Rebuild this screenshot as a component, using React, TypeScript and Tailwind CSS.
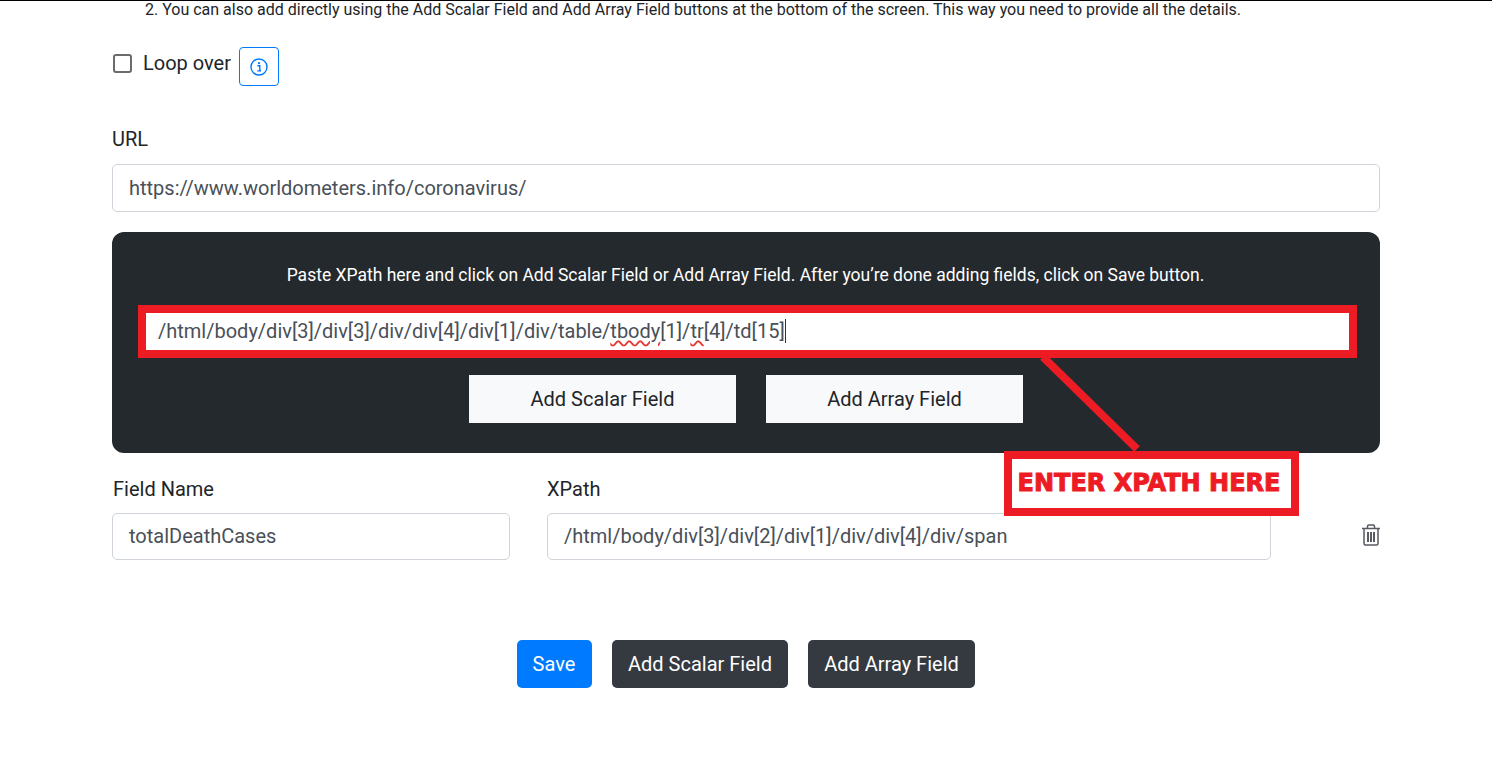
import React from "react";

const F = { fontFamily: "Roboto, sans-serif" };

function Trash() {
  return (
    <svg width="20" height="22" viewBox="0 0 20 22" fill="none" stroke="#555b60" strokeWidth="1.5">
      <path d="M1 4.5h18" />
      <path d="M6.5 4V2.2C6.5 1.5 7 1 7.700 1h4.600c.7 0 1.200.5 1.200 1.200V4" />
      <path d="M3 5v14.500C3 20.400 3.600 21 4.500 21h11c.9 0 1.500-.6 1.500-1.500V5" />
      <path d="M7 8v10M10 8v10M13 8v10" strokeWidth="2" />
    </svg>
  );
}

function Info() {
  return (
    <svg width="18" height="18" viewBox="0 0 18 18" fill="none">
      <circle cx="9" cy="9" r="8" stroke="#007bff" strokeWidth="1.4" />
      <circle cx="9" cy="5.200" r="1.100" fill="#007bff" />
      <path d="M7.300 7.700H9.800V12.600H11M7.200 12.900H11" stroke="#007bff" strokeWidth="1.400" />
    </svg>
  );
}

function Field({ className, value }: { className: string; value: string }) {
  return (
    <div className={`flex items-center px-4 bg-white border border-[#ced4da] rounded-[5px] text-[20px] text-[#495057] ${className}`}>
      {value}
    </div>
  );
}

export default function App() {
  return (
    <div style={F} className="relative w-[1492px] h-[766px] overflow-hidden bg-white border-t border-black text-[#212529]">
      <p className="pl-[145px] h-[18px] leading-[18px] text-[16px] text-[#212529]">
        2. You can also add directly using the Add Scalar Field and Add Array Field buttons at the bottom of the screen. This way you need to provide all the details.
      </p>

      <div className="px-[112px]">
        <div className="flex items-start mt-[28px] h-[39px]">
          <span className="mt-[7px] ml-[1px] w-[19px] h-[19px] border-2 border-[#6b6b6b] rounded-[3px] bg-white" />
          <span className="ml-[11px] mt-[2px] text-[20px] leading-[28px]">Loop over</span>
          <span className="ml-[8px] w-[40px] h-[39px] flex items-center justify-center border border-[#007bff] rounded-[4px]">
            <Info />
          </span>
        </div>

        <div className="mt-[40px] text-[20px] leading-[27px]">URL</div>
        <Field className="mt-[11px] h-[48px] w-full" value="https://www.worldometers.info/coronavirus/" />

        <div className="mt-[20px] h-[221px] bg-[#24292d] rounded-[12px] px-[26px] pt-[30px]">
          <p className="text-center text-white text-[17.5px] leading-[27px] -ml-[1px] whitespace-nowrap">
            Paste XPath here and click on Add Scalar Field or Add Array Field. After you’re done adding fields, click on Save button.
          </p>
          <div className="mt-[16px] w-[1219px] h-[53px] border-[8px] border-[#ed1c24] bg-white flex items-center pl-[12px] pb-[2px] text-[20px] text-[#495057]">
            <span>/html/body/div[3]/div[3]/div/div[4]/div[1]/div/table/</span>
            <span className="underline decoration-wavy decoration-[#e53935] decoration-[1.5px] underline-offset-2">tbody</span>
            <span>[1]/</span>
            <span className="underline decoration-wavy decoration-[#e53935] decoration-[1.5px] underline-offset-2">tr</span>
            <span>[4]/td[15]</span>
            <span className="w-px h-[24px] bg-[#333]" />
          </div>
          <div className="mt-[17px] flex justify-center gap-[30px]">
            <div className="w-[267px] h-[48px] bg-[#f8f9fa] flex items-center justify-center text-[20px]">Add Scalar Field</div>
            <div className="w-[257px] h-[48px] bg-[#f8f9fa] flex items-center justify-center text-[20px]">Add Array Field</div>
          </div>
        </div>

        <div className="flex mt-[22px]">
          <div className="w-[398px] shrink-0">
            <div className="mt-[1px] pl-[1px] text-[20px] leading-[27px]">Field Name</div>
            <Field className="mt-[10px] h-[47px] w-full pb-[2px]" value="totalDeathCases" />
          </div>
          <div className="ml-[37px] w-[724px] shrink-0">
            <div className="mt-[1px] text-[20px] leading-[27px]">XPath</div>
            <Field className="mt-[10px] h-[47px] w-full pb-[2px]" value="/html/body/div[3]/div[2]/div[1]/div/div[4]/div/span" />
          </div>
          <div className="ml-[90px] mt-[49px] shrink-0">
            <Trash />
          </div>
        </div>

        <div className="mt-[80px] flex justify-center gap-[20px] text-[20px] text-white -ml-[1px]">
          <div className="w-[75px] h-[48px] rounded-[5px] bg-[#007bff] flex items-center justify-center">Save</div>
          <div className="w-[176px] h-[48px] rounded-[5px] bg-[#343a40] flex items-center justify-center pl-[1px]">Add Scalar Field</div>
          <div className="w-[167px] h-[48px] rounded-[5px] bg-[#343a40] flex items-center justify-center pl-[1px]">Add Array Field</div>
        </div>
      </div>

      <svg className="absolute left-[1030px] top-[354px]" width="120" height="100" viewBox="0 0 120 100">
        <path d="M13 2 L107 94" stroke="#ed1c24" strokeWidth="8" fill="none" />
      </svg>
      <div
        style={{ fontFamily: '"DejaVu Sans", sans-serif' }}
        className="absolute left-[1004px] top-[450px] w-[295px] h-[65px] bg-white border-[8px] border-[#ed1c24] flex items-center justify-center font-bold text-[#ed1c24] text-[24px] whitespace-nowrap pb-[1px] pr-[5px] [-webkit-text-stroke:1px_#ed1c24]"
      >
        ENTER XPATH HERE
      </div>
    </div>
  );
}
